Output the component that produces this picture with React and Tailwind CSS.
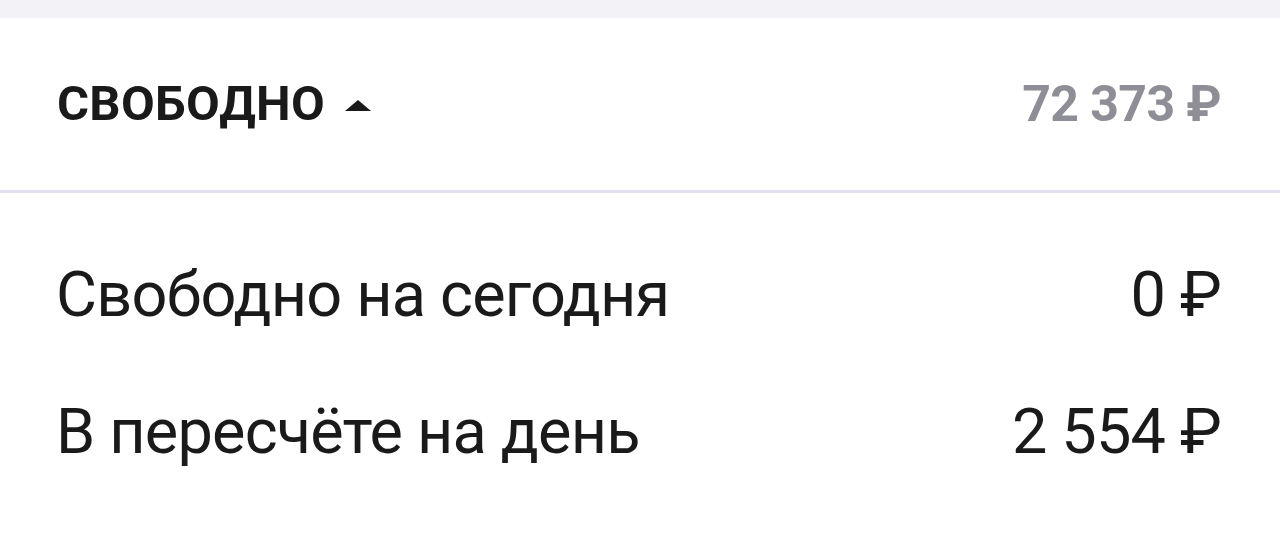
import React from 'react';

const Row = ({ label, value }) => (
  <div className="flex items-center justify-between h-[137px]">
    <span>{label}</span>
    <span>{value}</span>
  </div>
);

const App = () => {
  const rows = [
    { label: 'Свободно на сегодня', value: '0 ₽' },
    { label: 'В пересчёте на день', value: '2 554 ₽' },
  ];

  return (
    <div className="w-[1280px] h-[536px] bg-white font-['Roboto',sans-serif] overflow-hidden">
      <div className="h-[18px] bg-[#f3f3f7]" />
      <div className="flex items-center justify-between h-[172px] pl-[57px] pr-[59px]">
        <div className="flex items-center gap-[20px]">
          <span className="text-[49px] font-bold text-[#1a1a1a] tracking-[0.3px]">СВОБОДНО</span>
          <svg width="26" height="11" viewBox="0 0 26 11" className="mt-[2px]">
            <path d="M13 0 L26 11 L0 11 Z" fill="#1a1a1a" />
          </svg>
        </div>
        <span className="text-[50px] font-bold text-[#8e8e96] tracking-[-0.6px]">72 373 ₽</span>
      </div>
      <div className="h-[3px] bg-[#e2e0f0]" />
      {/* daily amounts */}
      <div className="pl-[56px] pr-[59px] pt-[34px] text-[63px] text-[#1a1a1a] tracking-[-0.8px]">
        {rows.map((r) => (
          <Row key={r.label} label={r.label} value={r.value} />
        ))}
      </div>
    </div>
  );
};

export default App;
